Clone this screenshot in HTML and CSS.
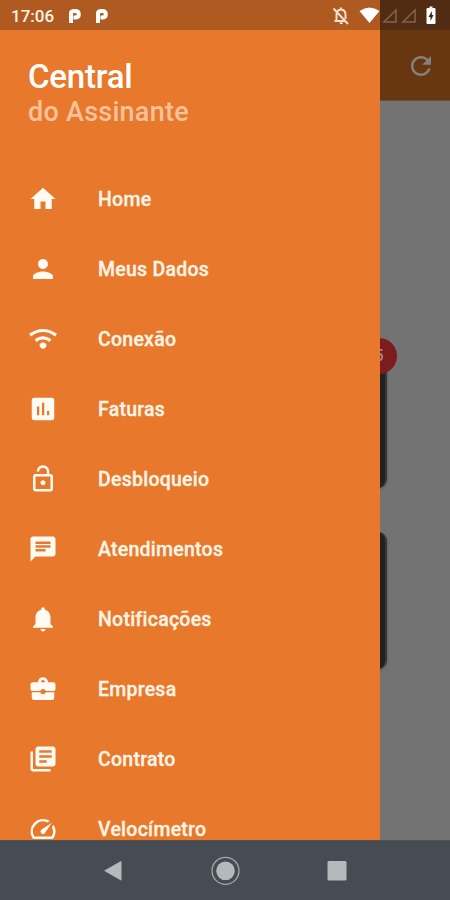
FILE: index.html
```html
<!DOCTYPE html>
<html lang="pt-BR">
<head>
<meta charset="utf-8">
<title>Central do Assinante</title>
<link rel="stylesheet" href="styles.css">
</head>
<body>
<div class="phone">
  <header class="status">
    <span class="time">17:06</span>
    <svg class="notif" viewBox="0 0 14 16"><path d="M3 15V8M3 9V5Q3 3 7 3Q10.800 3 10.800 6.200Q10.800 9.500 7 9.500H5.500"/></svg>
    <svg class="notif" viewBox="0 0 14 16"><path d="M3 15V8M3 9V5Q3 3 7 3Q10.800 3 10.800 6.200Q10.800 9.500 7 9.500H5.500"/></svg>
    <svg class="system" viewBox="0 0 120 30">
      <g class="line"><path d="M4.500 21H16M6.500 20V14.500Q6.500 10 11 9.500Q15.500 10 15.500 14.500V19M11 7.500V10M3.500 8.500L18 24"/></g>
      <path fill="#fff" d="M9.500 22.500H13Q12.500 24.300 11.200 24.300T9.500 22.500Z"/>
      <path fill="#fff" d="M29.500 11Q39.500 4 49.500 11L39.500 23Z"/>
      <path class="signal" d="M54 22H66V10ZM73 22H85V10Z"/>
      <path fill="#fff" d="M97.500 8H99.500V6.500H102.500V8H104.500Q105.500 8 105.500 9V23Q105.500 24 104.500 24H97.500Q96.500 24 96.500 23V9Q96.500 8 97.500 8Z"/>
      <path fill="#3c1f0b" d="M102 11L98.500 17H100.500V21L103.500 15H101.800Z"/>
    </svg>
  </header>
  <main class="screen">
    <nav class="drawer">
      <div class="brand"><h1>Central</h1><p>do Assinante</p></div>
      <ul class="menu">
        <li><svg viewBox="0 0 24 24"><path d="M10 20V14H14V20H19V12H22L12 3L2 12H5V20Z"/></svg><span>Home</span></li>
        <li><svg viewBox="0 0 24 24"><path d="M12 12c2.210 0 4-1.790 4-4s-1.790-4-4-4-4 1.790-4 4 1.790 4 4 4zm0 2c-2.670 0-8 1.340-8 4v2h16v-2c0-2.660-5.330-4-8-4z"/></svg><span>Meus Dados</span></li>
        <li><svg viewBox="0 0 24 24"><g class="waves"><path d="M1.600 8.900Q12 1.500 22.400 8.900M6 13.300Q12 8.900 18 13.300"/></g><path d="M12 14.600Q14.500 14.900 14.900 16.900Q13.900 19.700 12 19.700T9.100 16.900Q9.500 14.900 12 14.600Z"/></svg><span>Conexão</span></li>
        <li><svg viewBox="0 0 24 24"><path fill-rule="evenodd" d="M5 3H19Q21 3 21 5V19Q21 21 19 21H5Q3 21 3 19V5Q3 3 5 3ZM7.200 10V17H9V10ZM11.200 7V17H13V7ZM15.200 13.500V17H17V13.500Z"/></svg><span>Faturas</span></li>
        <li><svg viewBox="0 0 24 24"><path d="M12 17c1.100 0 2-.9 2-2s-.9-2-2-2-2 .9-2 2 .9 2 2 2zm6-9h-1V6c0-2.760-2.240-5-5-5S7 3.240 7 6h1.900c0-1.710 1.390-3.100 3.100-3.100s3.100 1.390 3.100 3.100v2H6c-1.100 0-2 .9-2 2v10c0 1.100.9 2 2 2h12c1.100 0 2-.9 2-2V10c0-1.100-.9-2-2-2zm0 12H6V10h12v10z"/></svg><span>Desbloqueio</span></li>
        <li><svg viewBox="0 0 24 24"><path d="M20 2H4c-1.100 0-1.990.9-1.990 2L2 22l4-4h14c1.100 0 2-.9 2-2V4c0-1.100-.9-2-2-2zM6 9h12v2H6V9zm8 5H6v-2h8v2zm4-6H6V6h12v2z"/></svg><span>Atendimentos</span></li>
        <li><svg viewBox="0 0 24 24"><path d="M12 22c1.100 0 2-.9 2-2h-4c0 1.100.89 2 2 2zm6-6v-5c0-3.070-1.640-5.640-4.500-6.320V4c0-.83-.67-1.500-1.500-1.500s-1.500.67-1.500 1.500v.68C7.630 5.360 6 7.920 6 11v5l-2 2v1h16v-1l-2-2z"/></svg><span>Notificações</span></li>
        <li><svg viewBox="0 0 24 24"><path fill-rule="evenodd" d="M4 6.500H8Q8.500 2.500 12 2.500T16 6.500H20Q22 6.500 22 8.500V12Q22 13.600 20.500 13.600H14.200Q13.700 12 12 12T9.800 13.600H3.500Q2 13.600 2 12V8.500Q2 6.500 4 6.500ZM10.300 6.500H13.700Q13.500 4.800 12 4.800T10.300 6.500Z"/><path d="M3 14.600H9.800Q10.300 16.200 12 16.200T14.200 14.600H21V19Q21 20.800 19.200 20.800H4.800Q3 20.800 3 19Z"/></svg><span>Empresa</span></li>
        <li><svg viewBox="0 0 24 24"><path d="M4 6H2v14c0 1.100.9 2 2 2h14v-2H4V6zm16-4H8c-1.100 0-2 .9-2 2v12c0 1.100.9 2 2 2h12c1.100 0 2-.9 2-2V4c0-1.100-.9-2-2-2zm-1 9H9V9h10v2zm-4 4H9v-2h6v2zm4-8H9V5h10v2z"/></svg><span>Contrato</span></li>
        <li><svg viewBox="0 0 24 24"><path d="M20.380 8.570l-1.230 1.850a8 8 0 0 1-.22 7.580H5.070A8 8 0 0 1 15.580 6.850l1.850-1.230A10 10 0 0 0 3.350 19a2 2 0 0 0 1.720 1h13.850a2 2 0 0 0 1.740-1 10 10 0 0 0-.27-10.440zm-9.790 6.840a2 2 0 0 0 2.830 0l5.660-8.490-8.490 5.660a2 2 0 0 0 0 2.830z"/></svg><span>Velocímetro</span></li>
      </ul>
    </nav>
    <section class="backdrop">
      <div class="toolbar"><svg viewBox="0 0 24 24"><path d="M17.650 6.350C16.200 4.900 14.210 4 12 4c-4.420 0-7.990 3.580-7.990 8s3.570 8 7.990 8c3.730 0 6.840-2.550 7.730-6h-2.080c-.82 2.330-3.040 4-5.650 4-3.310 0-6-2.690-6-6s2.690-6 6-6c1.660 0 3.140.69 4.220 1.780L13 11h7V4l-2.350 2.350z"/></svg></div>
      <div class="cards">
        <div class="card"><span class="badge">5</span></div>
        <div class="card"></div>
      </div>
    </section>
  </main>
  <footer class="softkeys">
    <svg viewBox="0 0 30 30"><path d="M6 14.800L23.500 4.800V24.800Z"/></svg>
    <svg viewBox="0 0 30 30"><circle cx="15.500" cy="14.800" r="9.300"/><circle class="ring" cx="15.500" cy="14.800" r="13.500"/></svg>
    <svg viewBox="0 0 30 30"><rect x="5.500" y="5" width="19" height="19.500" rx="1.500"/></svg>
  </footer>
</div>
</body>
</html>
```
FILE: styles.css
```css
* { box-sizing: border-box; margin: 0; padding: 0; }
body { font-family: Roboto, sans-serif; font-weight: 500; color: #fff; }
.phone { display: flex; flex-direction: column; width: 450px; height: 900px; overflow: hidden; }
.status {
  display: flex; align-items: center; height: 30px; flex: none;
  padding-left: 11px; color: #fdf3e8;
  background: linear-gradient(90deg, #ae5a20 380px, #512b12 380px);
}
.time { width: 57px; font-size: 17px; line-height: 30px; padding-top: 2px; }
.notif { width: 14px; height: 16px; margin: 1px 13px 0 0; fill: none; stroke: #fff; stroke-width: 4; }
.system { width: 120px; height: 30px; margin-left: auto; }
.line { fill: none; stroke: #f3dfcd; stroke-width: 2; }
.signal { fill: none; stroke: #85634b; stroke-width: 1.5; }
.screen { display: flex; flex: 1; min-height: 0; overflow: hidden; }
.drawer { width: 380px; flex: none; background: #e8782b; overflow: hidden; }
.brand { height: 134px; padding: 28px 28px 0; }
.brand h1 { font-size: 33px; line-height: 38px; font-weight: 500; letter-spacing: -.2px; }
.brand p { font-size: 27px; line-height: 32px; letter-spacing: .25px; color: #f6c19b; }
.menu { list-style: none; }
.menu li { display: flex; align-items: center; height: 70px; padding-left: 28px; font-size: 19.5px; letter-spacing: .25px; color: #fff5e6; -webkit-text-stroke: .3px #fff5e6; }
.menu svg { width: 30px; height: 30px; margin-right: 40px; fill: #fffaf2; overflow: visible; }
.menu .waves { fill: none; stroke: #fffaf2; stroke-width: 2.5; }
.backdrop { flex: 1; background: #737373; overflow: hidden; }
.toolbar { height: 71px; background: #693612; padding: 21px 0 0 26px; border-bottom: 1px solid #67503f; }
.toolbar svg { width: 30px; height: 30px; fill: #85817e; display: block; }
.cards { display: flex; flex-direction: column; gap: 44px; padding-top: 250px; }
.card { position: relative; width: 27px; height: 137px; margin-left: -20px; border-radius: 9px; background: #222; border-right: 2px solid #363636; box-shadow: 0 1px 3px #555; }
.badge { position: absolute; top: -13px; left: 1px; width: 36px; height: 36px; border-radius: 50%; background: #7c1c1c; color: #a88484; font-size: 16px; line-height: 36px; text-align: center; }
.softkeys { display: flex; align-items: center; justify-content: center; gap: 82px; height: 60px; flex: none; background: #454c53; border-top: 1px solid #59504d; }
.softkeys svg { width: 30px; height: 30px; fill: #b3babd; }
.softkeys .ring { fill: none; stroke: #a2a9ac; stroke-width: 1.300; }
```
